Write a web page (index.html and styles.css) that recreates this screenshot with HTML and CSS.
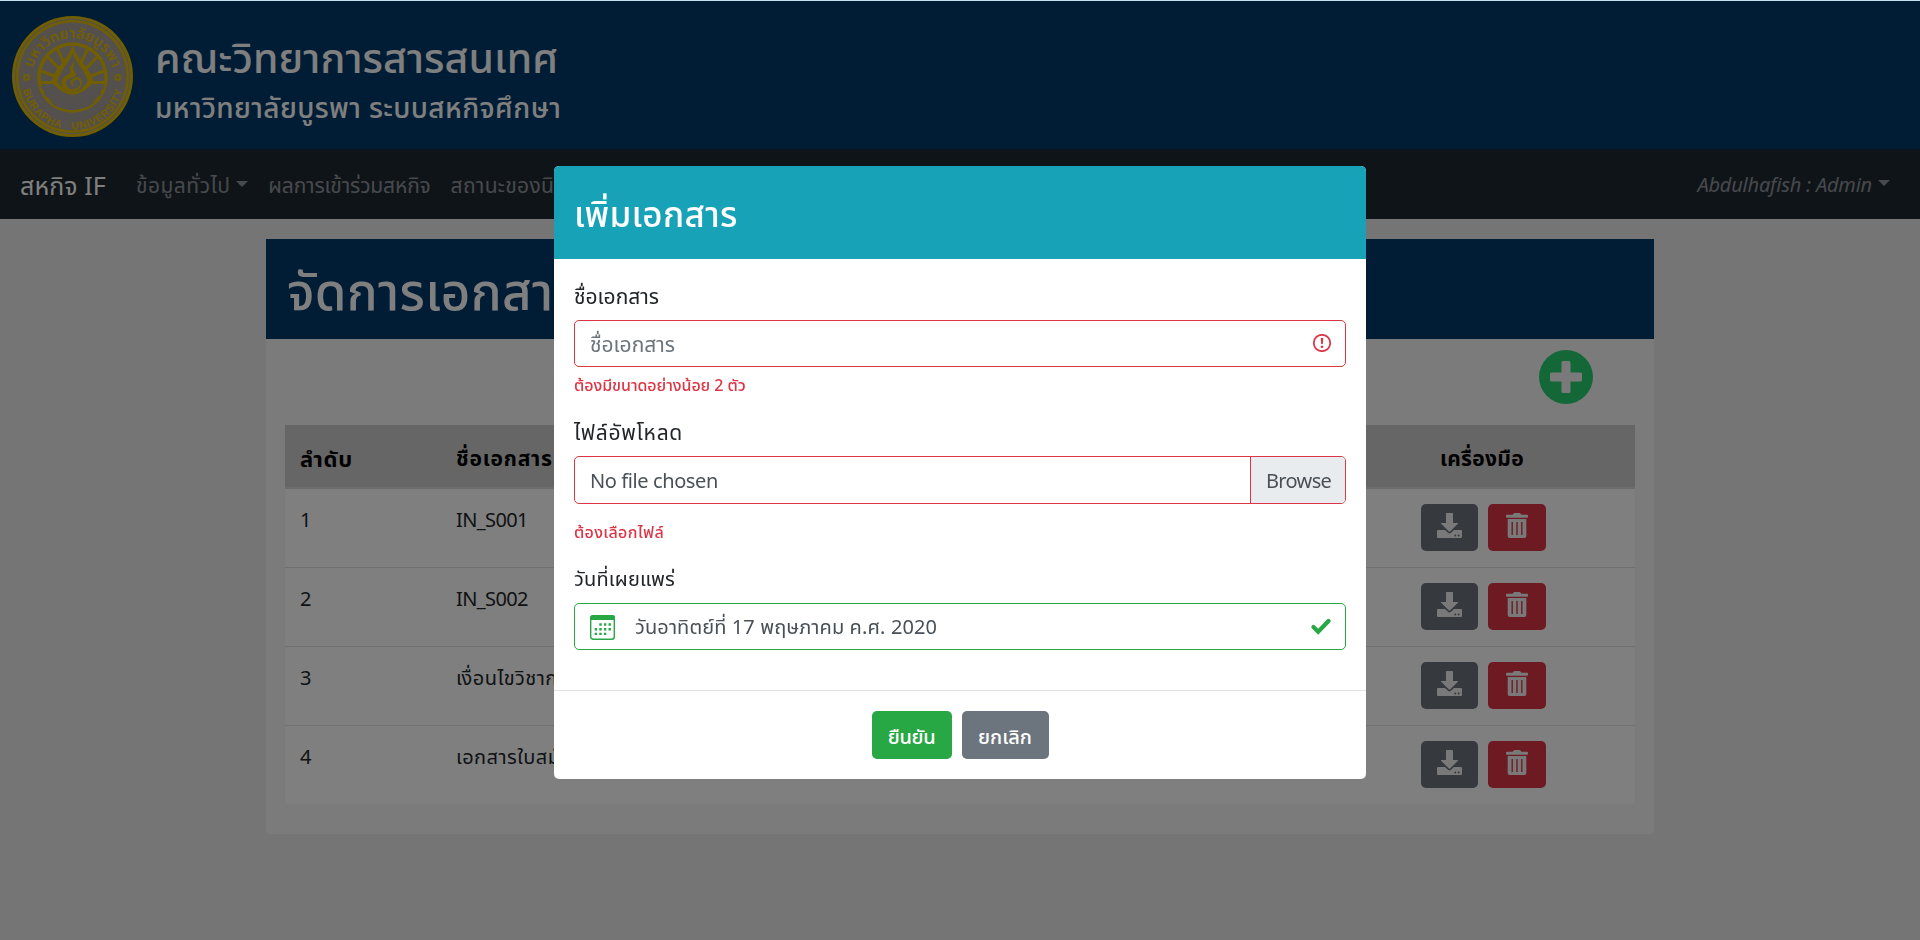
FILE: index.html
```html
<!DOCTYPE html>
<html lang="th">
<head>
<meta charset="utf-8">
<title>สหกิจ IF</title>
<link rel="stylesheet" href="styles.css">
</head>
<body>
<svg class="sprite" aria-hidden="true">
  <symbol id="i-download" viewBox="0 0 25 25"><path d="M9.6 0h5.8q.6 0 .6.7V10h4.6q.9 0 .3.8l-7.600 7.500q-.8.700-1.600 0L4.100 10.800q-.6-.8.3-.8H9V.7Q9 0 9.600 0z"/><path fill-rule="evenodd" d="M1 17h7l3 2.800q1.500 1.200 3 0L17 17h7q1 0 1 1v6q0 1-1 1H1q-1 0-1-1v-6q0-1 1-1zM17.300 22.600a1 1 0 1 0 2 0 1 1 0 0 0-2 0zM20.700 22.600a1 1 0 1 0 2 0 1 1 0 0 0-2 0z"/></symbol>
  <symbol id="i-trash" viewBox="0 0 22 25"><path d="M1 1.700h5.500L7.600.5Q8 0 8.600 0h4.800q.6 0 1 .5l1.100 1.200H21q1 0 1 1v1.300q0 .8-1 .8H1q-1 0-1-.8V2.700q0-1 1-1z"/><path fill-rule="evenodd" d="M1.700 6h18.600v17q0 2-2 2H3.700q-2 0-2-2zM5.500 9v13h1.400V9zM10.300 9v13h1.400V9zM15.100 9v13h1.400V9z"/></symbol>
</svg>
<div class="page">
  <header class="banner">
    <svg class="seal" viewBox="0 0 120 120">
      <defs>
        <path id="arc-top" d="M20 72A41 41 0 1 1 100 72"/>
        <path id="arc-bottom" d="M9.500 62A50.500 50.500 0 0 0 110.500 62"/>
        <clipPath id="disc"><circle cx="60" cy="61" r="33"/></clipPath>
      </defs>
      <circle cx="60" cy="60" r="60" fill="#e2bc00"/>
      <circle cx="60" cy="60" r="57.200" fill="#a8a09c"/>
      <circle cx="60" cy="60" r="56" fill="#e2bc00"/>
      <circle cx="60" cy="60" r="53.500" fill="#a8a09c"/>
      <circle cx="60" cy="61" r="35" fill="#e2bc00"/>
      <g clip-path="url(#disc)">
        <circle cx="60" cy="61" r="31.500" fill="#a8a09c"/>
        <g stroke="#e2bc00" stroke-width="3"><path d="M60 66L27 54M60 66L33 38M60 66L44 30M60 66L93 54M60 66L87 38M60 66L76 30M26 66H94"/></g>
        <path fill="#e2bc00" d="M60 28c3 14 17 22 21 37q-10 13-21 13T39 65c4-15 18-23 21-37z"/>
        <path fill="#a8a09c" d="M60 36c2 10 13 18 15 29q-6 10-15 10t-15-10c2-11 13-19 15-29z"/>
        <path fill="#e2bc00" d="M61 43c2 7-2 8 1 12 3 3 1 5-2 6-5 1-8 4-6 7 1 5 7 6 11 3s3-8-1-8c-4 1-5 5-2 6-2 1-4-1-4-3 0-4 6-7 10-4 3 4 1 11-7 13-8 1-13-5-12-10 1-4 5-6 8-8 2-2-1-4 1-7 2-2 3-4 3-7z"/>
        <path fill="none" stroke="#a8a09c" stroke-width="2.200" d="M26 70c10 1 15 12 34 12s24-11 34-12M26 76c10 1 17 11 34 11s24-10 34-11M28 83c10 1 18 9 32 9s22-8 32-9"/>
      </g>
      <g fill="none" stroke="#e2bc00" stroke-width="2"><circle cx="14.500" cy="61" r="2.400"/><circle cx="105" cy="61" r="2.400"/></g>
      <text class="seal-th"><textPath href="#arc-top" startOffset="50%" text-anchor="middle">มหาวิทยาลัยบูรพา</textPath></text>
      <text class="seal-en"><textPath href="#arc-bottom" startOffset="50%" text-anchor="middle" xml:space="preserve">BURAPHA   UNIVERSITY</textPath></text>
    </svg>
    <div class="banner-text">
      <h1>คณะวิทยาการสารสนเทศ</h1>
      <p>มหาวิทยาลัยบูรพา ระบบสหกิจศึกษา</p>
    </div>
  </header>
  <nav class="navbar">
    <a class="brand">สหกิจ IF</a>
    <a class="item caret general">ข้อมูลทั่วไป</a>
    <a class="item results">ผลการเข้าร่วมสหกิจ</a>
    <a class="item">สถานะของนิสิต</a>
    <a class="item user caret">Abdulhafish : Admin</a>
  </nav>
  <main class="card">
    <h2>จัดการเอกสาร</h2>
    <div class="tools"><button class="add"><svg viewBox="0 0 54 54"><circle cx="27" cy="27" r="27" fill="#28d070"/><path d="M24 11h6q1.500 0 1.500 1.500v10h10q1.500 0 1.500 1.500v6q0 1.500-1.500 1.500h-10v10q0 1.500-1.500 1.500h-6q-1.500 0-1.500-1.500v-10h-10Q11 31.500 11 30v-6q0-1.500 1.500-1.500h10v-10Q22.500 11 24 11z" fill="#f5f5f5"/></svg></button></div>
    <div class="table">
      <div class="row head"><span class="no">ลำดับ</span><span>ชื่อเอกสาร</span><span class="c">เครื่องมือ</span></div>
      <div class="row"><span>1</span><span class="code">IN_S001</span><div class="acts"><button class="dl"><svg><use href="#i-download"/></svg></button><button class="rm"><svg><use href="#i-trash"/></svg></button></div></div>
      <div class="row"><span>2</span><span class="code">IN_S002</span><div class="acts"><button class="dl"><svg><use href="#i-download"/></svg></button><button class="rm"><svg><use href="#i-trash"/></svg></button></div></div>
      <div class="row"><span>3</span><span>เงื่อนไขวิชาการ</span><div class="acts"><button class="dl"><svg><use href="#i-download"/></svg></button><button class="rm"><svg><use href="#i-trash"/></svg></button></div></div>
      <div class="row"><span>4</span><span>เอกสารใบสมัคร</span><div class="acts"><button class="dl"><svg><use href="#i-download"/></svg></button><button class="rm"><svg><use href="#i-trash"/></svg></button></div></div>
    </div>
  </main>
</div>
<div class="backdrop">
  <section class="modal">
    <h3>เพิ่มเอกสาร</h3>
    <div class="body">
      <label>ชื่อเอกสาร</label>
      <div class="field bad"><span class="ph">ชื่อเอกสาร</span>
        <svg class="mark" viewBox="0 0 18 18"><circle cx="9" cy="9" r="8.200" fill="none" stroke="#dc3545" stroke-width="1.700"/><path d="M7.700 4h2.600l-.5 6H8.200z" fill="#dc3545"/><circle cx="9" cy="12.700" r="1.300" fill="#dc3545"/></svg></div>
      <p class="err">ต้องมีขนาดอย่างน้อย 2 ตัว</p>
      <label class="wide">ไฟล์อัพโหลด</label>
      <div class="field bad file"><span class="none">No file chosen</span><span class="browse">Browse</span></div>
      <p class="err second">ต้องเลือกไฟล์</p>
      <label class="tight">วันที่เผยแพร่</label>
      <div class="field good">
        <svg class="cal" viewBox="0 0 25 25"><rect x=".7" y=".7" width="23.600" height="23.600" rx="2.500" fill="none" stroke="#28a745" stroke-width="1.400"/><path d="M0 5V3q0-3 3-3h19q3 0 3 3v2z" fill="#28a745"/><path d="M9.300 9.500h12M4.700 14.200h17M4.700 18.900h12" stroke="#28a745" stroke-width="2.400" stroke-dasharray="2.400 2.200"/></svg>
        <span class="date">วันอาทิตย์ที่ 17 พฤษภาคม ค.ศ. 2020</span>
        <svg class="mark check" viewBox="0 0 20 18"><path d="M2.500 10l4.700 4.700L17.500 4" fill="none" stroke="#28a745" stroke-width="4.200" stroke-linecap="round"/></svg></div>
    </div>
    <footer><button class="ok">ยืนยัน</button><button class="cancel">ยกเลิก</button></footer>
  </section>
</div>
</body>
</html>
```
FILE: styles.css
```css
* { box-sizing: border-box; }
body {
  margin: 0;
  height: 940px;
  overflow: hidden;
  background: #ebebeb;
  color: #212529;
  font: 20px/30px "Noto Sans", "Noto Sans Thai", sans-serif;
}
h1, h2, h3, p { margin: 0; font-weight: 500; }
button { border: 0; padding: 0; font: inherit; color: #fff; }
.sprite { position: absolute; width: 0; height: 0; }
.page { border-top: 1px solid #c2e2f0; }

.banner { display: flex; height: 148px; background: #003a6b; color: #fff; padding: 15px 0 0 12px; }
.seal { width: 121px; height: 121px; }
.seal text { fill: #e2bc00; }
.seal-th { font-size: 14.5px; font-weight: 600; }
.seal-en { font: 700 10.5px "Liberation Sans", sans-serif; letter-spacing: .6px; }
.banner-text { padding: 13px 0 0 22px; white-space: nowrap; }
.banner h1 { font-size: 41px; line-height: 56px; letter-spacing: .1px; }
.banner p { font-size: 28px; line-height: 45px; letter-spacing: .4px; }

.navbar { display: flex; align-items: center; height: 70px; padding: 2px 30px 0 20px; background: #1e2832; }
.brand { font-size: 25px; color: #fff; margin-right: 30px; letter-spacing: .1px; }
.item { color: rgba(255, 255, 255, .5); font-size: 21px; margin-right: 20px; white-space: nowrap; letter-spacing: .3px; }
.general { letter-spacing: .5px; }
.results { letter-spacing: -.15px; }
.caret::after { content: ""; display: inline-block; margin-left: 6px; vertical-align: 6px; border: 6px solid transparent; border-top-color: currentColor; border-bottom: 0; }
.user { margin: 0 0 0 auto; font-size: 20px; font-style: italic; letter-spacing: -.2px; }

.card { width: 1388px; height: 595px; margin: 20px auto 0; background: #f7f7f7; border-radius: 0 0 4px 4px; }
.card h2 { height: 100px; padding-left: 21px; background: #003a6b; color: #fff; font-size: 51px; line-height: 102px; letter-spacing: .3px; }
.tools { display: flex; justify-content: flex-end; height: 86px; padding: 11px 61px 0 0; }
.add { width: 54px; height: 54px; background: none; }
.add svg { display: block; }
.table { margin: 0 19px; background: #fff; }
.row { display: grid; grid-template-columns: 156px 957px 1fr; height: 79px; padding: 16px 0 0 15px; border-top: 1px solid #dee2e6; letter-spacing: .45px; }
.code { letter-spacing: -.6px; }
.head { height: 64px; padding-top: 18px; background: #ccc; border: 0; border-bottom: 2px solid #d6d8da; color: #000; font-size: 21px; font-weight: 700; letter-spacing: .8px; }
.no { font-size: 22px; }
.head + .row { border: 0; height: 78px; padding-top: 16px; }
.c { padding-left: 27px; letter-spacing: .3px; }
.acts { display: flex; gap: 10px; padding-left: 8px; }
.acts button { display: flex; justify-content: center; align-items: flex-start; height: 47px; border-radius: 5px; margin-top: -1px; padding-top: 9px; }
.acts svg { height: 25px; fill: #f3f3f3; }
.dl { width: 57px; background: #6c757d; }
.dl svg { width: 25px; }
.rm { width: 58px; background: #dc3545; }
.rm svg { width: 22px; }

.backdrop { position: fixed; inset: 1px 0 0; background: rgba(0, 0, 0, .5); }
.modal { width: 812px; height: 613px; margin: 165px auto 0; background: #fff; border-radius: 5px; overflow: hidden; }
.modal h3 { height: 93px; padding-left: 20px; background: #17a2b8; color: #fff; font-size: 35px; line-height: 95px; letter-spacing: .3px; }
.body { height: 431px; padding: 22px 20px 0; }
label { display: block; height: 30px; margin-bottom: 9px; font-size: 21px; }
.wide { letter-spacing: .7px; }
.tight { font-size: 20px; letter-spacing: .15px; }
.field { display: flex; align-items: center; height: 47px; padding: 1px 14px 0 15px; border: 1px solid #dc3545; border-radius: 5px; color: #495057; }
.ph { color: #6c757d; font-size: 21px; }
.none { letter-spacing: -.4px; padding-top: 2px; }
.mark { width: 18px; height: 18px; margin: -2px 0 0 auto; }
.check { width: 20px; }
.good { border-color: #28a745; }
.cal { width: 25px; height: 25px; margin-right: 20px; }
.date { letter-spacing: .1px; }
.err { height: 24px; margin: 5px 0 21px; color: #dc3545; font-size: 16px; line-height: 26px; letter-spacing: -.05px; }
.file { height: 48px; padding: 0 0 0 15px; }
.browse { display: flex; align-items: center; width: 95px; height: 100%; margin-left: auto; padding: 2px 0 0 15px; background: #e9ecef; border-left: 1px solid #dc3545; border-radius: 0 4px 4px 0; letter-spacing: -.65px; }
.err.second { margin: 15px 0 21px; letter-spacing: .35px; }
.modal footer { display: flex; justify-content: center; gap: 10px; border-top: 1px solid #dee2e6; padding-top: 20px; }
.modal footer button { height: 48px; border-radius: 5px; font-weight: 500; padding-top: 3px; }
.ok { width: 80px; background: #28a745; letter-spacing: -.4px; }
.cancel { width: 87px; background: #6c757d; }
```
